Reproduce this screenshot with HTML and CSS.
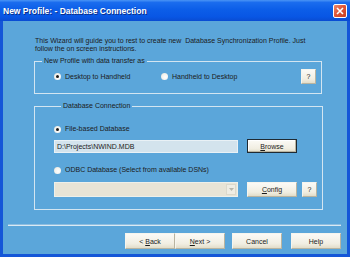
FILE: index.html
```html
<!DOCTYPE html>
<html lang="en">
<head>
  <meta charset="UTF-8" />
  <title>New Profile: - Database Connection</title>
  <link rel="stylesheet" href="styles.css">
</head>
<body>
  <div class="window">
    <div class="titlebar">
      <span class="title">New Profile: - Database Connection</span>
      <button class="close-button">
        <svg width="8" height="8" viewBox="0 0 8 8"><path d="M1 1 L7 7 M7 1 L1 7" stroke="#fff" stroke-width="1.6" /></svg>
      </button>
    </div>

    <div class="content">
      <p class="intro">This Wizard will guide you to rest to create new&nbsp; Database Synchronization Profile. Just<br>follow the on screen instructions.</p>

      <fieldset class="group group-direction">
        <legend>New Profile with data transfer as</legend>
        <div class="row">
          <label class="option option-first"><span class="radio checked"></span>Desktop to Handheld</label>
          <label class="option"><span class="radio"></span>Handheld to Desktop</label>
          <button class="btn btn-help">?</button>
        </div>
      </fieldset>

      <fieldset class="group group-db">
        <legend>Database Connection</legend>
        <label class="option option-file"><span class="radio checked"></span>File-based Database</label>
        <div class="row row-field">
          <div class="textbox">D:\Projects\NWIND.MDB</div>
          <button class="btn btn-default"><u>B</u>rowse</button>
        </div>
        <label class="option option-odbc"><span class="radio"></span>ODBC Database (Select from available DSNs)</label>
        <div class="row row-field">
          <div class="combo">
            <span class="combo-arrow">
              <svg width="5" height="3" viewBox="0 0 5 3"><path d="M0 0 L5 0 L2.5 3 Z" fill="#b9b7ac" /></svg>
            </span>
          </div>
          <button class="btn btn-config"><u>C</u>onfig</button>
          <button class="btn btn-help">?</button>
        </div>
      </fieldset>

      <div class="separator"></div>

      <div class="footer">
        <div class="pair">
          <button class="btn btn-nav">&lt; <u>B</u>ack</button>
          <button class="btn btn-nav"><u>N</u>ext &gt;</button>
        </div>
        <button class="btn btn-nav">Cancel</button>
        <button class="btn btn-nav">Help</button>
      </div>
    </div>
  </div>
</body>
</html>
```

FILE: styles.css
```css
* {
  margin: 0;
  padding: 0;
  box-sizing: border-box;
}

body {
  width: 350px;
  height: 257px;
  overflow: hidden;
  font-family: 'Liberation Sans', Arial, sans-serif;
  color: #1b1b1b;
  background: #1456d8;
}

.window {
  width: 350px;
  height: 257px;
  display: flex;
  flex-direction: column;
  background: #1456d8;
}

.titlebar {
  height: 21px;
  display: flex;
  align-items: center;
  justify-content: space-between;
  padding: 0 3px 0 3px;
  background: linear-gradient(180deg, #4a94f5 0%, #1a6cee 12%, #0c5ee8 45%, #0856e4 80%, #0a4cd2 100%);
}

.title {
  color: #fff;
  font-weight: 700;
  font-size: 8.5px;
  text-shadow: 1px 1px 0 #0a2f8a;
}

.close-button {
  width: 14px;
  height: 14px;
  border: 1px solid #fff;
  border-radius: 2px;
  background: linear-gradient(135deg, #ee8a6c 0%, #e0573a 45%, #c8401f 100%);
  display: flex;
  align-items: center;
  justify-content: center;
}

.content {
  flex: 1;
  margin: 0 3px 3px 3px;
  background: #5ba6da;
  display: flex;
  flex-direction: column;
}

.intro {
  margin: 16px 0 0 32px;
  font-size: 7px;
  line-height: 8px;
  white-space: nowrap;
}

.group {
  margin: 4px 25px 0 31px;
  border: 1px solid #d3e5f1;
  font-size: 7px;
}

.group legend {
  margin-left: 7px;
  padding: 0 2px;
  line-height: 8px;
}

.row {
  display: flex;
  align-items: center;
}

.group-direction .row {
  padding: 4px 5px 9px 19px;
}

.option {
  display: flex;
  align-items: center;
  gap: 4px;
  line-height: 8px;
  white-space: nowrap;
}

.option-first {
  width: 107px;
}

.radio {
  width: 7px;
  height: 7px;
  border-radius: 50%;
  background: radial-gradient(circle at 60% 60%, #ffffff 0%, #f2f2ee 55%, #d8d6cc 100%);
  display: flex;
  align-items: center;
  justify-content: center;
}

.radio.checked::after {
  content: '';
  width: 3px;
  height: 3px;
  border-radius: 50%;
  background: #1a1a1a;
}

.btn {
  font-family: inherit;
  font-size: 7px;
  color: #1b1b1b;
  background: linear-gradient(180deg, #fbfaf6 0%, #f1eee2 70%, #e2ddc9 100%);
  border: 1px solid #f6f5ee;
  border-right-color: #b9b4a0;
  border-bottom-color: #b9b4a0;
}

.btn-help {
  width: 15px;
  height: 15px;
  margin-left: auto;
}

.group-db {
  margin-top: 8px;
  padding: 0 5px 12px 19px;
}

.option-file {
  margin-top: 15px;
}

.option-odbc {
  margin-top: 13px;
}

.row-field {
  margin-top: 6px;
}

.option-odbc + .row-field {
  margin-top: 8px;
}

.textbox {
  width: 184px;
  height: 13px;
  padding-left: 2px;
  line-height: 11px;
  font-size: 7px;
  background: #d3e3ed;
  border: 1px solid #e9f1f6;
}

.combo {
  width: 184px;
  height: 15px;
  background: #e8e4d6;
  border: 1px solid #eef0ea;
  display: flex;
  justify-content: flex-end;
  padding: 1px;
}

.combo-arrow {
  width: 10px;
  background: #efede4;
  border: 1px solid #dcd9cc;
  display: flex;
  align-items: center;
  justify-content: center;
}

.btn-default {
  width: 50px;
  height: 14px;
  margin-left: 9px;
  border: 1px solid #1f2a33;
  box-shadow: inset -1px -1px 0 #b9b4a0, inset 1px 1px 0 #fff;
}

.btn-config {
  width: 50px;
  height: 15px;
  margin-left: 9px;
}

.row-field .btn-help {
  margin-left: 5px;
}

.separator {
  margin: 14px 6px 0 5px;
  height: 2px;
  border-top: 1px solid #8dbde0;
  border-bottom: 1px solid #d9e9f4;
}

.footer {
  display: flex;
  margin: 7px 6px 0 122px;
  gap: 7px;
}

.pair {
  display: flex;
}

.btn-nav {
  width: 50px;
  height: 16px;
}

.footer > .btn-nav:last-child {
  margin-left: 2px;
}
```
